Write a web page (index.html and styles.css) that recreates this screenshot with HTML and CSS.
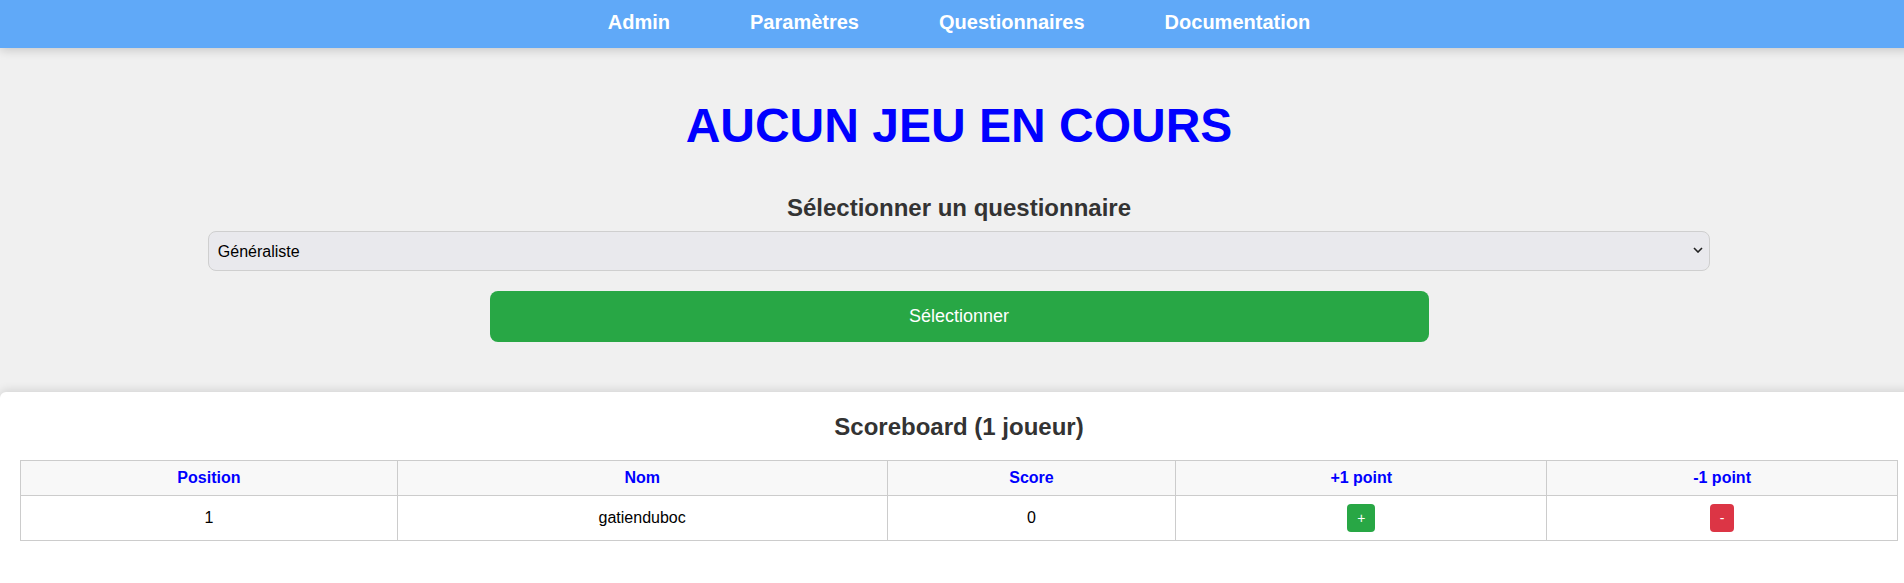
FILE: index.html
```html
<!DOCTYPE html>
<html lang="fr">
<head>
<meta charset="utf-8">
<title>Aucun jeu en cours</title>
<link rel="stylesheet" href="styles.css">
</head>
<body>
<div class="page">
  <nav class="nav">
    <a href="#">Admin</a>
    <a href="#">Paramètres</a>
    <a href="#">Questionnaires</a>
    <a href="#">Documentation</a>
  </nav>
  <main class="main">
    <h1 class="title">AUCUN JEU EN COURS</h1>
    <h2 class="subtitle">Sélectionner un questionnaire</h2>
    <div class="select-wrap">
      <select class="select">
        <option>Généraliste</option>
      </select>
      <svg class="chevron" width="10" height="6" viewBox="0 0 10 6"><path d="M1 1 L5 5 L9 1" fill="none" stroke="#222" stroke-width="1.6"/></svg>
    </div>
    <button class="btn-select">Sélectionner</button>
  </main>
  <section class="card">
    <h2 class="card-title">Scoreboard (1 joueur)</h2>
    <table class="board">
      <colgroup>
        <col class="c1"><col class="c2"><col class="c3"><col class="c4"><col class="c5">
      </colgroup>
      <thead>
        <tr><th>Position</th><th>Nom</th><th>Score</th><th>+1 point</th><th>-1 point</th></tr>
      </thead>
      <tbody>
        <tr>
          <td>1</td>
          <td>gatienduboc</td>
          <td>0</td>
          <td><button class="pt plus">+</button></td>
          <td><button class="pt minus">-</button></td>
        </tr>
      </tbody>
    </table>
  </section>
</div>
</body>
</html>
```
FILE: styles.css
```css
html, body {
  margin: 0;
  padding: 0;
  overflow: hidden;
  background: #f0f0f0;
}
body {
  font-family: "Liberation Sans", Arial, sans-serif;
  color: #000;
}
.page {
  width: 1918px;
  min-height: 583px;
  background: #f0f0f0;
}
.nav {
  height: 48px;
  box-sizing: border-box;
  padding-top: 11px;
  background: #60a9f8;
  display: flex;
  justify-content: center;
  gap: 80px;
  box-shadow: 0 2px 10px rgba(0, 0, 0, 0.18);
  position: relative;
  z-index: 2;
}
.nav a {
  color: #fff;
  font-weight: bold;
  font-size: 20px;
  line-height: 23px;
  text-decoration: none;
}
.main {
  padding: 51px 20px 0;
  display: flex;
  flex-direction: column;
  align-items: center;
}
.title {
  margin: 0;
  font-size: 48px;
  line-height: 54px;
  color: #0000ff;
  font-weight: bold;
}
.subtitle {
  margin: 41px 0 0;
  font-size: 24px;
  line-height: 27px;
  color: #333;
  font-weight: bold;
}
.select-wrap {
  margin-top: 10px;
  width: 80%;
  position: relative;
}
.select {
  display: block;
  width: 100%;
  height: 40px;
  box-sizing: border-box;
  padding: 0 9px;
  appearance: none;
  -webkit-appearance: none;
  background: #e9e9ed;
  border: 1px solid #cfcfcf;
  border-radius: 8px;
  font-family: "Liberation Sans", Arial, sans-serif;
  font-size: 16px;
  color: #000;
}
.chevron {
  position: absolute;
  right: 7px;
  top: 16px;
  pointer-events: none;
}
.btn-select {
  margin-top: 20px;
  width: 50%;
  height: 51px;
  background: #28a745;
  color: #fff;
  border: none;
  border-radius: 8px;
  font-family: "Liberation Sans", Arial, sans-serif;
  font-size: 18px;
}
.card {
  margin-top: 50px;
  background: #fff;
  border-radius: 6px 6px 0 0;
  box-shadow: 0 -2px 10px rgba(0, 0, 0, 0.12);
  padding: 21px 20px 40px;
  min-height: 150px;
}
.card-title {
  margin: 0 0 20px;
  text-align: center;
  font-size: 24px;
  line-height: 27px;
  color: #333;
  font-weight: bold;
}
.board {
  width: 100%;
  border-collapse: collapse;
  font-size: 16px;
}
.c1 { width: 377px; }
.c2 { width: 490px; }
.c3 { width: 289px; }
.c4 { width: 371px; }
.c5 { width: 351px; }
.board th,
.board td {
  border: 1px solid #ccc;
  text-align: center;
  padding: 8px;
  line-height: 18px;
}
.board th {
  background: #f8f8f8;
  color: #0000ff;
  font-weight: bold;
}
.board td {
  height: 28px;
}
.pt {
  display: inline-block;
  vertical-align: middle;
  height: 28px;
  padding: 0 10px;
  border: none;
  border-radius: 4px;
  color: #fff;
  font-family: "Liberation Sans", Arial, sans-serif;
  font-size: 14px;
}
.plus { background: #28a745; }
.minus { background: #dc3545; }
```
